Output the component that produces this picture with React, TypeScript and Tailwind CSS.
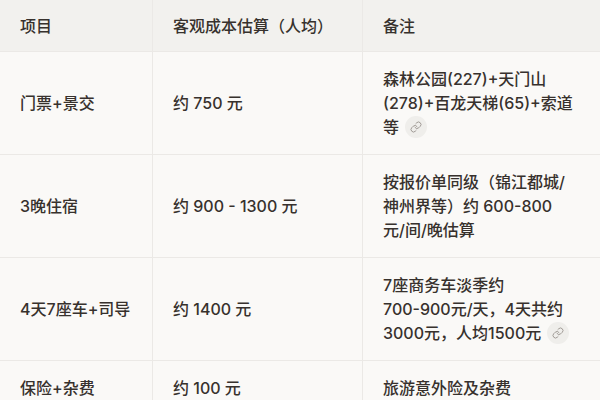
import React from "react";
import { Link } from "lucide-react";

const LinkBadge = () => (
  <span className="inline-flex items-center justify-center w-[22px] h-[22px] rounded-full bg-[#efeeeb] align-middle ml-[6px] -mt-[3px]">
    <Link size={12} strokeWidth={2} className="text-[#a09b96]" />
  </span>
);

type Row = { item: string; cost: string; note: React.ReactNode };

const rows: Row[] = [
  {
    item: "门票+景交",
    cost: "约 750 元",
    note: (
      <>
        森林公园(227)+天门山
        <br />
        (278)+百龙天梯(65)+索道
        <br />
        等
        <LinkBadge />
      </>
    ),
  },
  {
    item: "3晚住宿",
    cost: "约 900 - 1300 元",
    note: (
      <>
        按报价单同级（锦江都城/
        <br />
        神州界等）约 600-800
        <br />
        元/间/晚估算
      </>
    ),
  },
  {
    item: "4天7座车+司导",
    cost: "约 1400 元",
    note: (
      <>
        7座商务车淡季约
        <br />
        700-900元/天，4天共约
        <br />
        3000元，人均1500元
        <LinkBadge />
      </>
    ),
  },
  {
    item: "保险+杂费",
    cost: "约 100 元",
    note: <>旅游意外险及杂费</>,
  },
];

export default function App() {
  return (
    <div
      className="w-[600px] h-[400px] overflow-hidden bg-[#faf9f7] text-[#37312d] text-[16px] leading-[24px] font-medium"
      style={{ fontFamily: 'Inter, "Noto Sans CJK SC", sans-serif' }}
    >
      <div className="grid grid-cols-[153px_210px_237px] bg-[#f2f1ee] h-[52px] border-b border-[#ebe9e6]">
        <div className="flex items-center pl-[20px] border-r border-[#ebe9e6]">项目</div>
        <div className="flex items-center pl-[20px] border-r border-[#ebe9e6]">客观成本估算（人均）</div>
        <div className="flex items-center pl-[20px]">备注</div>
      </div>
      {rows.map((r, i) => (
        <div
          key={i}
          className="grid grid-cols-[153px_210px_237px] border-b border-[#ebe9e6]"
        >
          <div className="flex items-center pl-[20px] border-r border-[#ebe9e6]">{r.item}</div>
          <div className="flex items-center pl-[20px] border-r border-[#ebe9e6]">{r.cost}</div>
          <div className="pl-[20px] pr-[10px] py-[15px] whitespace-nowrap">{r.note}</div>
        </div>
      ))}
    </div>
  );
}
